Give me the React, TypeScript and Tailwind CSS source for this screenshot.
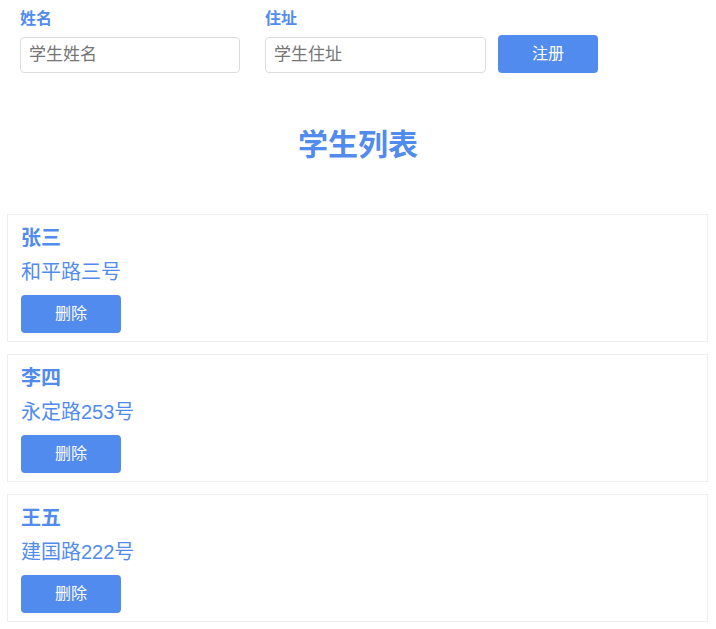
import { FC, useState } from "react";

interface Student {
    name: string;
    address: string;
}

const initialStudents: Student[] = [
    { name: "张三", address: "和平路三号" },
    { name: "李四", address: "永定路253号" },
    { name: "王五", address: "建国路222号" },
];

const App: FC = () => {
    const [students, setStudents] = useState<Student[]>(initialStudents);
    const [name, setName] = useState("");
    const [address, setAddress] = useState("");

    const onRegister = () => {
        if (!name || !address) return;
        setStudents([...students, { name, address }]);
        setName("");
        setAddress("");
    };

    return (
        <div
            className="min-h-screen bg-white text-[#528bee]"
            style={{ fontFamily: '"Liberation Sans", "Noto Sans CJK SC", sans-serif' }}
        >
            <div className="flex items-end pl-5 pt-[7px]">
                <div className="flex flex-col w-[220px]">
                    <label className="text-[16px] leading-[24px] font-bold">姓名</label>
                    <input
                        value={name}
                        onChange={(e) => setName(e.target.value)}
                        placeholder="学生姓名"
                        className="mt-[6px] h-[36px] border border-[#dddddd] rounded-[4px] px-[8px] text-[17px] text-[#333] placeholder-[#757575] outline-none"
                    />
                </div>
                <div className="flex flex-col w-[221px] ml-[25px]">
                    <label className="text-[16px] leading-[24px] font-bold">住址</label>
                    <input
                        value={address}
                        onChange={(e) => setAddress(e.target.value)}
                        placeholder="学生住址"
                        className="mt-[6px] h-[36px] border border-[#dddddd] rounded-[4px] px-[8px] text-[17px] text-[#333] placeholder-[#757575] outline-none"
                    />
                </div>
                <button
                    onClick={onRegister}
                    className="ml-[12px] w-[100px] h-[38px] bg-[#528bee] text-white text-[16px] rounded-[4px]"
                >
                    注册
                </button>
            </div>

            <h2 className="text-center text-[30px] leading-[40px] font-bold mt-[52px] mb-[49px]">学生列表</h2>

            <div className="flex flex-col gap-[12px] pl-[7px] pr-[8px] pb-[8px]">
                {students.map((s, i) => (
                    <div key={i} className="border border-[#eeeeee] pt-[9px] pb-[8px] px-[13px]">
                        <div className="text-[20px] leading-[28px] font-bold">{s.name}</div>
                        <div className="text-[20px] leading-[28px] mt-[6px]">{s.address}</div>
                        <button
                            onClick={() => setStudents(students.filter((_, j) => j !== i))}
                            className="mt-[9px] w-[100px] h-[38px] bg-[#528bee] text-white text-[16px] rounded-[4px] block"
                        >
                            删除
                        </button>
                    </div>
                ))}
            </div>
        </div>
    );
};

export default App;
